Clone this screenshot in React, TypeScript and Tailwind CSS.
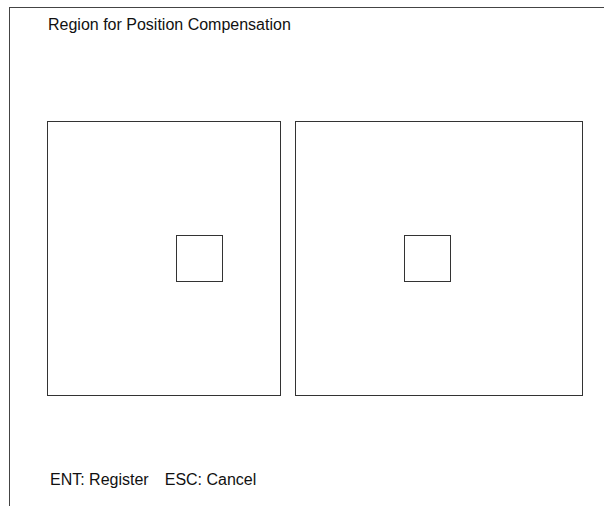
export default function App() {
  return (
    <div className="w-[604px] h-[506px] bg-white overflow-hidden font-['Liberation_Sans',Arial,sans-serif] text-[#111]">
      <div className="ml-[9px] mt-[7px] w-[620px] h-[520px] border-l border-t border-[#444] pl-[37px] pt-[8px]">
        <div className="text-[16px] leading-[18px] pl-[1px]">Region for Position Compensation</div>

        <div className="flex gap-[14px] mt-[87px]">
          <div className="relative w-[234px] h-[275px] border border-[#333]">
            <div className="absolute left-[128px] top-[113px] w-[47px] h-[47px] border border-[#333]" />
          </div>
          <div className="relative w-[288px] h-[275px] border border-[#333]">
            <div className="absolute left-[108px] top-[113px] w-[47px] h-[47px] border border-[#333]" />
          </div>
        </div>

        <div className="flex gap-[16px] mt-[75px] pl-[3px] text-[16px] leading-[18px]">
          <span>ENT: Register</span>
          <span>ESC: Cancel</span>
        </div>
      </div>
    </div>
  );
}
